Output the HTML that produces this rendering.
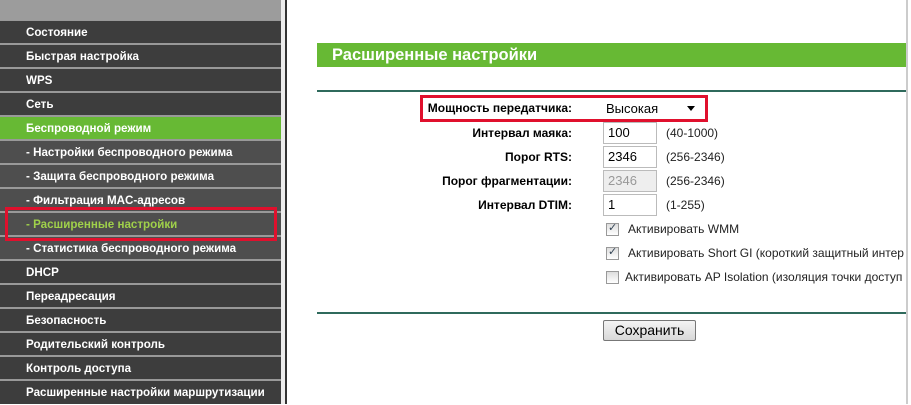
<!DOCTYPE html>
<html><head><meta charset="utf-8"><style>
*{margin:0;padding:0;box-sizing:border-box}
body{width:911px;height:404px;background:#fff;position:relative;overflow:hidden;font-family:"Liberation Sans",sans-serif;font-size:12px;color:#000}
.sb{position:absolute;left:0;top:0;width:281px;height:404px;background:#999}
.top{position:absolute;left:0;top:0;width:281px;height:20px;background:#9c9c9c}
.r{position:absolute;left:0;width:281px;height:22px;background:#3d3d3d;color:#fff;font-weight:bold;font-size:11.6px;line-height:24px;padding-left:26px}
.r.s{background:#4e4e4e}
.r.g{background:#67b934}
.r.a{color:#9fd04a}
.a1{position:absolute;left:281px;top:0;width:4px;height:404px;background:#ececec}
.a2{position:absolute;left:285px;top:0;width:1.5px;height:404px;background:#333}
.hdr{position:absolute;left:317px;top:43px;width:589px;height:24px;background:#67b934;color:#fff;font-weight:bold;font-size:16.5px;line-height:24px;padding-left:15px}
.ln{position:absolute;left:317px;width:589px;height:2px;background:#2f6a5c}
.rb{position:absolute;left:906px;top:0;width:2px;height:404px;background:#ccc}
.lb{position:absolute;right:339px;font-weight:bold;font-size:12px;line-height:22px}
.in{position:absolute;left:603px;width:54px;height:22px;border:1px solid #bbb;background:#fff;font-size:13px;line-height:20px;padding-left:4px}
.rg{position:absolute;left:666px;font-size:12px;line-height:22px;color:#222}
.cb{position:absolute;left:606px;width:13px;height:13px;border:1px solid #999;background:linear-gradient(#ddd,#fff)}
.ct{position:absolute;font-size:12px;color:#222}
.red{position:absolute;border:3px solid #e0102d}
</style></head><body>
<div class="sb"></div><div class="top"></div>
<div class="r" style="top:21px">Состояние</div>
<div class="r" style="top:45px">Быстрая настройка</div>
<div class="r" style="top:69px">WPS</div>
<div class="r" style="top:93px">Сеть</div>
<div class="r g" style="top:117px">Беспроводной режим</div>
<div class="r s" style="top:141px">- Настройки беспроводного режима</div>
<div class="r s" style="top:165px">- Защита беспроводного режима</div>
<div class="r s" style="top:189px">- Фильтрация MAC-адресов</div>
<div class="r s a" style="top:213px">- Расширенные настройки</div>
<div class="r s" style="top:237px">- Статистика беспроводного режима</div>
<div class="r" style="top:261px">DHCP</div>
<div class="r" style="top:285px">Переадресация</div>
<div class="r" style="top:309px">Безопасность</div>
<div class="r" style="top:333px">Родительский контроль</div>
<div class="r" style="top:357px">Контроль доступа</div>
<div class="r" style="top:381px;height:23px">Расширенные настройки маршрутизации</div>
<div class="red" style="left:5px;top:207px;width:272px;height:34px"></div>
<div class="a1"></div><div class="a2"></div><div class="rb"></div>
<div class="hdr">Расширенные настройки</div>
<div class="ln" style="top:90px"></div>
<div class="ln" style="top:312px"></div>
<div class="red" style="left:420px;top:95px;width:288px;height:27px"></div>
<div class="lb" style="top:97px">Мощность передатчика:</div>
<div style="position:absolute;left:603px;top:98px;width:96px;height:21px;background:#fff;font-size:13px;line-height:21px;padding-left:3px">Высокая<span style="position:absolute;left:84px;top:8px;border-left:4px solid transparent;border-right:4px solid transparent;border-top:5px solid #000"></span></div>
<div class="lb" style="top:122px">Интервал маяка:</div>
<div class="in" style="top:122px">100</div><div class="rg" style="top:122px">(40-1000)</div>
<div class="lb" style="top:146px">Порог RTS:</div>
<div class="in" style="top:146px">2346</div><div class="rg" style="top:146px">(256-2346)</div>
<div class="lb" style="top:170px">Порог фрагментации:</div>
<div class="in" style="top:170px;background:#eee;color:#999">2346</div><div class="rg" style="top:170px">(256-2346)</div>
<div class="lb" style="top:194px">Интервал DTIM:</div>
<div class="in" style="top:194px">1</div><div class="rg" style="top:194px">(1-255)</div>
<div class="cb" style="top:223px"><span style="position:absolute;left:1px;top:-3px;font-size:11px;color:#345">✓</span></div><div class="ct" style="left:628px;top:222px">Активировать WMM</div>
<div class="cb" style="top:247px"><span style="position:absolute;left:1px;top:-3px;font-size:11px;color:#345">✓</span></div><div class="ct" style="left:628px;top:246px">Активировать Short GI (короткий защитный интер</div>
<div class="cb" style="top:271px"></div><div class="ct" style="left:625px;top:270px">Активировать AP Isolation (изоляция точки доступ</div>
<div style="position:absolute;left:603px;top:320px;width:93px;height:21px;border:1px solid #777;border-radius:2px;background:linear-gradient(#f4f4f4,#d8d8d8);font-size:14px;line-height:19px;text-align:center">Сохранить</div>
</body></html>
